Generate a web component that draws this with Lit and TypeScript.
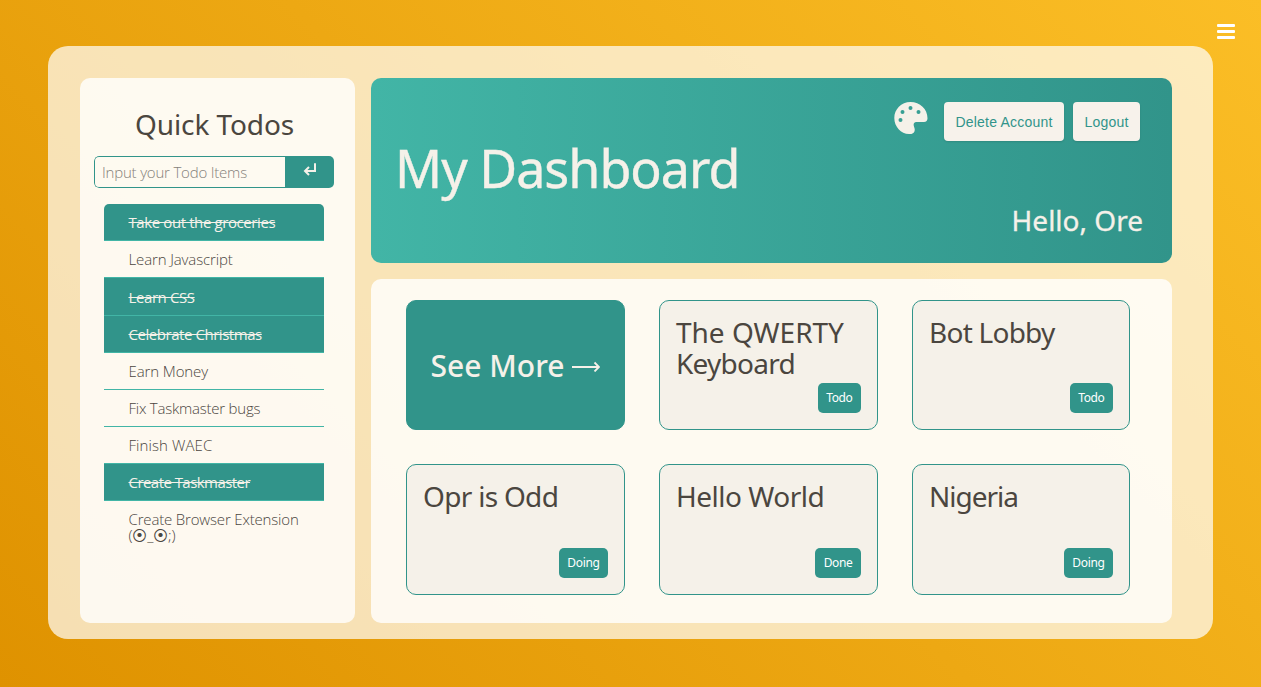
import { LitElement, html, css, svg } from "lit";
import { customElement } from "lit/decorators.js";
import { classMap } from "lit/directives/class-map.js";
import { styleMap } from "lit/directives/style-map.js";

const todos = [
  { text: "Take out the groceries", done: true, tracking: -0.4 },
  { text: "Learn Javascript", done: false, tracking: -0.13 },
  { text: "Learn CSS", done: true, tracking: -0.4 },
  { text: "Celebrate Christmas", done: true, tracking: -0.45 },
  { text: "Earn Money", done: false, tracking: -0.1 },
  { text: "Fix Taskmaster bugs", done: false, tracking: -0.23 },
  { text: "Finish WAEC", done: false, tracking: 0.08 },
  { text: "Create Taskmaster", done: true, tracking: -0.55 },
  { text: "Create Browser Extension (⦿_⦿;)", done: false, tracking: -0.17 },
];

const tasks = [
  {
    title: [
      { text: "The QWERTY ", tracking: 0 },
      { text: "Keyboard", tracking: -0.75 },
    ],
    status: "Todo",
  },
  { title: [{ text: "Bot Lobby", tracking: -0.75 }], status: "Todo" },
  { title: [{ text: "Opr is Odd", tracking: -0.7 }], status: "Doing" },
  { title: [{ text: "Hello World", tracking: -0.48 }], status: "Done" },
  { title: [{ text: "Nigeria", tracking: -1 }], status: "Doing" },
];

const spacing = (px: number) => styleMap({ letterSpacing: `${px}px` });

@customElement("quick-todos")
export class QuickTodos extends LitElement {
  static styles = css`
    :host {
      display: block;
      box-sizing: border-box;
      padding: 28px 21px 0 14px;
      border-radius: 10px;
      background: rgba(255, 255, 255, 0.8);
      color: #4b463f;
      font-family: "Open Sans", "Noto Sans", sans-serif;
    }
    .title {
      margin: 0 0 0 1px;
      height: 36px;
      line-height: 36px;
      text-align: center;
      font-family: "Noto Sans", sans-serif;
      font-size: 28px;
      font-weight: 400;
      letter-spacing: -0.1px;
    }
    .entry {
      display: flex;
      width: 240px;
      height: 32px;
      margin-top: 14px;
      border-radius: 5px;
      overflow: hidden;
    }
    .input {
      box-sizing: border-box;
      width: 191px;
      border: 1px solid #31948a;
      border-right: 0;
      border-radius: 5px 0 0 5px;
      padding: 0 7px 1px;
      background: transparent;
      font: 300 15px/30px "Open Sans", sans-serif;
      letter-spacing: -0.2px;
      color: #4b463f;
      outline: none;
    }
    .input::placeholder {
      color: #85817a;
      opacity: 1;
    }
    .send {
      display: flex;
      flex: 1;
      border: 0;
      padding: 7px 0 0 18px;
      background: #31948a;
    }
    .list {
      list-style: none;
      margin: 16px 0 0 10px;
      padding: 0;
      width: 220px;
    }
    .item {
      box-sizing: border-box;
      height: 37px;
      padding: 10px 20px 0 24.5px;
      border-bottom: 1px solid #42b5a6;
      font-size: 15px;
      font-weight: 300;
      line-height: 16px;
    }
    .item:first-child {
      border-radius: 5px 5px 0 0;
    }
    .item:nth-child(3) {
      height: 38px;
      padding-top: 11px;
    }
    .item:last-child {
      height: auto;
      border-bottom: 0;
    }
    .done {
      background: #31948a;
      color: #f5f1e9;
      font-weight: 400;
      text-decoration: line-through;
    }
  `;

  render() {
    return html`
      <h2 class="title">Quick Todos</h2>
      <div class="entry">
        <input class="input" placeholder="Input your Todo Items" />
        <button class="send" aria-label="Add">
          <svg width="14" height="16" viewBox="0 0 14 16" fill="none" stroke="#f5f1e9" stroke-width="2">
            <path d="M12 0.2V8H2.500M6 4L2 8l4 4" />
          </svg>
        </button>
      </div>
      <ul class="list">
        ${todos.map(
          (t) => html`<li class=${classMap({ item: true, done: t.done })} style=${spacing(t.tracking)}>${t.text}</li>`
        )}
      </ul>
    `;
  }
}

@customElement("dash-header")
export class DashHeader extends LitElement {
  static styles = css`
    :host {
      display: flex;
      box-sizing: border-box;
      justify-content: space-between;
      height: 185px;
      padding: 24px 29px 0 24px;
      border-radius: 10px;
      background: linear-gradient(to right, #42b5a6, #31948a);
      color: #f5f1e9;
      font-family: "Noto Sans", sans-serif;
    }
    .title {
      margin: 31px 0 0;
      font-size: 52px;
      line-height: 70px;
      font-weight: 400;
      letter-spacing: -1px;
      -webkit-text-stroke: 0.4px #f5f1e9;
    }
    .side {
      display: flex;
      flex-direction: column;
      align-items: flex-end;
    }
    .actions {
      display: flex;
      padding-right: 3px;
    }
    .palette {
      margin-right: 16px;
    }
    .btn {
      box-sizing: border-box;
      width: 120px;
      height: 39px;
      padding: 0;
      border: 0;
      border-radius: 4px;
      background: #f7f2eb;
      color: #31948a;
      font: 14px "Liberation Sans", Arial, sans-serif;
      letter-spacing: 0.2px;
      box-shadow: 0 1px 2px rgba(0, 0, 0, 0.12);
    }
    .small {
      width: 67px;
      margin-left: 9px;
    }
    .hello {
      margin-top: 59px;
      font-size: 28px;
      line-height: 40px;
      -webkit-text-stroke: 0.3px #f5f1e9;
    }
  `;

  render() {
    return html`
      <h1 class="title">My Dashboard</h1>
      <div class="side">
        <div class="actions">
          <svg class="palette" width="34" height="32" viewBox="0 0 34 32" fill="#f5f1e9">
            <path
              fill-rule="evenodd"
              d="M16.5 0C7.2 0 .3 7.4.3 16S7 32 15 32h1.300C19.700 32 21 29.500 20.700 27L19.700 23.400C19.300 21.500 20.500 20 22.300 20H30C32.300 20 33.500 18.500 33.500 16.300C33.500 7 26 0 16.500 0ZM16.500 4a2 2 0 1 1 0 4a2 2 0 1 1 0-4ZM8.500 8a2 2 0 1 1 0 4a2 2 0 1 1 0-4ZM24.500 8a2 2 0 1 1 0 4a2 2 0 1 1 0-4ZM6.500 16a2 2 0 1 1 0 4a2 2 0 1 1 0-4Z"
            />
          </svg>
          <button class="btn">Delete Account</button>
          <button class="btn small">Logout</button>
        </div>
        <div class="hello">Hello, Ore</div>
      </div>
    `;
  }
}

@customElement("task-grid")
export class TaskGrid extends LitElement {
  static styles = css`
    :host {
      display: grid;
      box-sizing: border-box;
      grid-template-columns: 219px 219px 218px;
      grid-template-rows: 130px 131px;
      gap: 34px;
      padding: 21px 0 0 35px;
      border-radius: 10px;
      background: rgba(255, 255, 255, 0.8);
      font-family: "Noto Sans", sans-serif;
    }
    .card {
      display: flex;
      flex-direction: column;
      justify-content: space-between;
      box-sizing: border-box;
      padding: 16px 16px 16px;
      border: 1px solid #31948a;
      border-radius: 10px;
      background: #f5f1e9;
      color: #4b463f;
    }
    .name {
      margin: 0;
      font-size: 28px;
      line-height: 31px;
      font-weight: 400;
    }
    .tag {
      align-self: flex-end;
      box-sizing: border-box;
      padding: 0 8.5px;
      border-radius: 5px;
      background: #31948a;
      color: #fff;
      font-size: 12px;
      line-height: 30.5px;
      letter-spacing: -0.35px;
    }
    .more {
      align-items: center;
      justify-content: center;
      background: #31948a;
      color: #f5f1e9;
      font-size: 30px;
      font-weight: 500;
      flex-direction: row;
      padding: 1px 0 0;
      gap: 8px;
    }
  `;

  render() {
    return html`
      <div class="card more">
        <span>See More</span>
        ${svg`<svg width="28" height="12" viewBox="0 0 28 12" fill="none" stroke="#f5f1e9" stroke-width="1.8"><path d="M0 7H26M22.500 2.500L27 7l-4.500 4.500"/></svg>`}
      </div>
      ${tasks.map(
        (t) => html`<div class="card">
          <h3 class="name">${t.title.map((w) => html`<span style=${spacing(w.tracking)}>${w.text}</span>`)}</h3>
          <span class="tag">${t.status}</span>
        </div>`
      )}
    `;
  }
}

@customElement("app-root")
export class AppRoot extends LitElement {
  static styles = css`
    :host {
      display: block;
      box-sizing: border-box;
      position: relative;
      height: 687px;
      padding: 46px 48px 48px;
      background: linear-gradient(45deg, #df9200, #fbbe26);
    }
    .menu {
      position: absolute;
      top: 24px;
      right: 26px;
      display: grid;
      gap: 3px;
    }
    .bar {
      width: 18px;
      height: 3px;
      border-radius: 1px;
      background: #fff;
    }
    .shell {
      display: grid;
      box-sizing: border-box;
      height: 593px;
      grid-template-columns: 275px 801px;
      grid-template-rows: 185px 344px;
      gap: 16px;
      padding: 32px;
      border-radius: 20px;
      background: rgba(255, 255, 255, 0.7);
    }
    .todos {
      grid-row: span 2;
    }
  `;

  render() {
    return html`
      <div class="menu"><div class="bar"></div><div class="bar"></div><div class="bar"></div></div>
      <main class="shell">
        <quick-todos class="todos"></quick-todos>
        <dash-header></dash-header>
        <task-grid></task-grid>
      </main>
    `;
  }
}
